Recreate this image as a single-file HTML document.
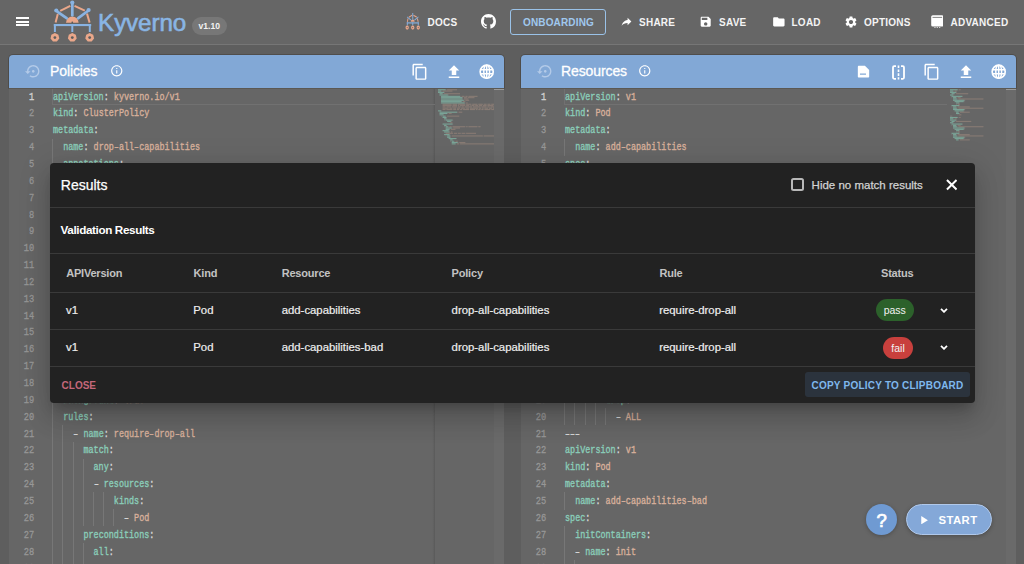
<!DOCTYPE html>
<html><head><meta charset="utf-8">
<style>
*{box-sizing:border-box;margin:0;padding:0}
html,body{width:1024px;height:564px;overflow:hidden;background:#5e5e5e;font-family:"Liberation Sans",sans-serif;position:relative}
.abs{position:absolute}
svg{position:absolute;display:block}
#tb{position:absolute;left:0;top:0;width:1024px;height:45px;background:#666;border-bottom:1px solid #767676}
.nav{position:absolute;top:17px;font-size:10px;font-weight:bold;color:#f4f4f4;letter-spacing:0.25px;line-height:12px;white-space:nowrap}
.panel{position:absolute;top:54.8px;width:495px;height:520px;background:#666;border-radius:4px 4px 0 0}
.hline{position:absolute;left:0;top:33.1px;width:495px;height:1.2px;background:#5b5853;z-index:5}
.ph{position:absolute;left:0;top:0;width:495px;height:33.3px;background:#82a8d6;border-radius:4px 4px 0 0;box-shadow:0 0 0.5px 0.8px rgba(60,55,50,0.55)}
.ptitle{position:absolute;top:8px;font-size:14px;color:#fff;line-height:16px;white-space:nowrap;-webkit-text-stroke:0.3px #fff;letter-spacing:-0.1px}
.ed{position:absolute;left:0;top:33.8px;width:495px;height:500px;background:#666;overflow:hidden}
.ln{position:absolute;left:0;width:25.3px;text-align:right;font-family:"Liberation Mono",monospace;font-size:10.6px;color:#979797;height:16.8px;line-height:17.4px;-webkit-text-stroke:0.3px currentColor;transform:scaleX(0.82);transform-origin:25.3px 0}
.ln.act{color:#d2d2d2;-webkit-text-stroke:0.35px currentColor}
.cl{position:absolute;left:43.7px;white-space:pre;font-family:"Liberation Mono",monospace;font-size:10.15px;letter-spacing:0;color:#d0d0d0;height:16.8px;line-height:18.2px;-webkit-text-stroke:0.35px currentColor;transform:scaleX(0.8342);transform-origin:0 0}
.cl i{font-style:normal;display:inline-block;transform:scaleX(1.45)}
.k{color:#8acdb9}.v{color:#d8b09b}.p{color:#dadada}
.guide{position:absolute;width:1px;background:#777}
.cur{position:absolute;left:42.6px;width:383px;height:16.2px;border:1px solid #717171;border-right:none;border-top:none}
.mm{left:429px;top:0}
.mmline{position:absolute;left:421.5px;top:0;width:4.3px;height:500px;background:linear-gradient(to right,rgba(0,0,0,0),rgba(0,0,0,0.02) 50%,rgba(0,0,0,0.13))}
.sbar{position:absolute;left:485.3px;top:0;width:9.7px;height:500px;background:#6a6a6a}
.sthumb{position:absolute;left:485.3px;top:0;width:9.7px;height:1.5px;background:#9a9a9a}
#modal{position:absolute;left:50px;top:162.8px;width:924.7px;height:239.8px;background:#222;border-radius:4px;box-shadow:0 8px 10px -5px rgba(0,0,0,.2),0 16px 24px 2px rgba(0,0,0,.12),0 6px 30px 5px rgba(0,0,0,.1);color:#fff}
.sep{position:absolute;left:0;width:924.7px;height:1px;background:#3a3a3a}
.th{position:absolute;top:104px;font-size:11px;font-weight:bold;color:#c2c2c2;line-height:13px;white-space:nowrap;letter-spacing:-0.2px}
.td{position:absolute;font-size:11.35px;color:#eeeeee;line-height:13px;white-space:nowrap;-webkit-text-stroke:0.2px currentColor;margin-top:-0.7px}
.badge{position:absolute;height:22px;border-radius:11px;font-size:10.5px;line-height:23.5px;text-align:center;color:#f2f2f2}
</style></head><body>

<!-- toolbar -->
<div id="tb">
  <div class="abs" style="left:16px;top:17px;width:13px;height:2px;background:#fff"></div>
  <div class="abs" style="left:16px;top:20.7px;width:13px;height:2px;background:#fff"></div>
  <div class="abs" style="left:16px;top:24.2px;width:13px;height:2px;background:#fff"></div>
  <svg style="left:45px;top:0px" width="55" height="45" viewBox="0 0 55 45">
    <g stroke="#eaa78a" stroke-width="2" fill="none" stroke-linecap="butt">
      <path d="M15.2 10.8 L25.3 5.8"/><path d="M29.5 5.8 L39.8 10.6"/>
      <path d="M12.8 14 L10.6 22.6"/><path d="M42 13.6 L44.6 22.6"/>
    </g>
    <path d="M21 22.8 A6.3 6.3 0 0 1 33.6 22.8 Z" fill="#eaa78a"/>
    <circle cx="27.3" cy="22.3" r="0.9" fill="#5a5a5a"/>
    <g stroke="#89b3e2" stroke-linecap="round">
      <path d="M27.3 4 L27.3 15.3" stroke-width="2.7"/>
      <path d="M12.6 11.8 L21.6 18.2" stroke-width="2.7"/>
      <path d="M42.2 11.5 L33.2 18.2" stroke-width="2.7"/>
    </g>
    <g fill="#89b3e2">
      <circle cx="27.3" cy="2.6" r="2.1"/><circle cx="11.3" cy="10.5" r="2.1"/><circle cx="43.6" cy="10.1" r="2.1"/>
      <rect x="8.8" y="24" width="37.4" height="2.1"/>
      <rect x="8.9" y="24" width="2" height="8"/>
      <rect x="26.3" y="24" width="2" height="8"/>
      <rect x="43.8" y="24" width="2" height="8"/>
    </g>
    <g fill="#eaa78a">
      <polygon points="9.90,33.00 13.42,34.69 14.29,38.50 11.85,41.55 7.95,41.55 5.51,38.50 6.38,34.69"/><polygon points="27.30,33.00 30.82,34.69 31.69,38.50 29.25,41.55 25.35,41.55 22.91,38.50 23.78,34.69"/><polygon points="44.70,33.00 48.22,34.69 49.09,38.50 46.65,41.55 42.75,41.55 40.31,38.50 41.18,34.69"/>
    </g>
    <g fill="#5c5c5c"><circle cx="9.9" cy="37.6" r="1.4"/><circle cx="27.3" cy="37.6" r="1.4"/><circle cx="44.7" cy="37.6" r="1.4"/></g>
  </svg>
  <div class="abs" style="left:98.1px;top:8.3px;font-size:24.2px;color:#89b5e4;line-height:30px;letter-spacing:-0.1px;-webkit-text-stroke:0.6px #89b5e4">Kyverno</div>
  <div class="abs" style="left:192px;top:17px;width:34.5px;height:17.8px;border-radius:9px;background:#777;color:#f2f2f2;font-size:8.6px;font-weight:bold;line-height:18.8px;text-align:center">v1.10</div>

  <!-- docs -->
  <svg style="left:404.3px;top:13.2px" width="17.5" height="17.5" viewBox="0 0 55 45" preserveAspectRatio="none">
    <g stroke="#e8a68b" stroke-width="3" fill="none"><path d="M15.2 10.8 L25.3 5.8"/><path d="M29.5 5.8 L39.8 10.6"/><path d="M12.8 14 L10.6 22.6"/><path d="M42 13.6 L44.6 22.6"/></g>
    <path d="M21.2 22.8 A6.2 6.2 0 0 1 33.6 22.8 Z" fill="#e8a68b"/>
    <g fill="#86b0de"><rect x="26" y="0" width="3" height="17"/><path d="M10 9 L22.5 17 L21 19 L9 11Z"/><path d="M45 9 L32.5 17 L34 19 L46 11Z"/><rect x="8.8" y="24" width="37.4" height="3"/><rect x="8.9" y="24" width="3" height="8"/><rect x="26" y="24" width="3" height="8"/><rect x="43.3" y="24" width="3" height="8"/></g>
    <g fill="none" stroke="#e8a68b" stroke-width="3.5"><circle cx="10" cy="37.5" r="3.5"/><circle cx="27.4" cy="37.5" r="3.5"/><circle cx="44.8" cy="37.5" r="3.5"/></g>
  </svg>
  <div class="nav" style="left:427.5px">DOCS</div>
  <!-- github -->
  <svg style="left:481px;top:14.2px" width="15" height="15" viewBox="0 0 16 16"><path fill="#fff" d="M8 0C3.58 0 0 3.58 0 8c0 3.54 2.29 6.53 5.47 7.59.4.07.55-.17.55-.38 0-.19-.01-.82-.01-1.49-2.01.37-2.53-.49-2.69-.94-.09-.23-.48-.94-.82-1.130-.28-.15-.68-.52-.01-.53.63-.01 1.08.58 1.23.82.72 1.21 1.87.87 2.330.66.07-.52.28-.87.51-1.07-1.780-.2-3.64-.89-3.64-3.95 0-.87.31-1.59.82-2.15-.08-.2-.36-1.02.08-2.12 0 0 .67-.21 2.2.82.64-.18 1.32-.27 2-.27.68 0 1.36.09 2 .27 1.53-1.04 2.2-.82 2.2-.82.44 1.1.16 1.92.08 2.12.51.56.82 1.27.82 2.15 0 3.07-1.87 3.75-3.65 3.95.29.25.54.73.54 1.48 0 1.07-.01 1.93-.01 2.2 0 .21.15.46.55.38A8.013 8.013 0 0016 8c0-4.42-3.58-8-8-8z"/></svg>
  <!-- onboarding -->
  <div class="abs" style="left:510.2px;top:9.4px;width:96px;height:25.4px;border:1.3px solid #9ac2e8;border-radius:3px"></div>
  <div class="nav" style="left:523px;color:#a0c8ee;letter-spacing:0.15px">ONBOARDING</div>
  <!-- share -->
  <svg style="left:620px;top:15px" width="13" height="13" viewBox="0 0 24 24"><path fill="#fff" d="M14 9V5l7 7-7 7v-4.1c-5 0-8.5 1.6-11 5.1 1-5 4-10 11-11z"/></svg>
  <div class="nav" style="left:639px">SHARE</div>
  <!-- save -->
  <svg style="left:699.2px;top:14.6px" width="13.4" height="13.4" viewBox="0 0 24 24"><path fill="#fff" d="M17 3H5c-1.11 0-2 .9-2 2v14c0 1.1.89 2 2 2h14c1.1 0 2-.9 2-2V7l-4-4zm-5 16c-1.66 0-3-1.34-3-3s1.34-3 3-3 3 1.34 3 3-1.34 3-3 3zm3-10H5V5h10v4z"/></svg>
  <div class="nav" style="left:719px">SAVE</div>
  <!-- load -->
  <svg style="left:771.5px;top:14.5px" width="13.7" height="13.7" viewBox="0 0 24 24"><path fill="#fff" d="M10 4H4c-1.1 0-1.99.9-1.99 2L2 18c0 1.1.9 2 2 2h16c1.1 0 2-.9 2-2V8c0-1.1-.9-2-2-2h-8l-2-2z"/></svg>
  <div class="nav" style="left:791.5px">LOAD</div>
  <!-- options -->
  <svg style="left:843.8px;top:14.8px" width="14" height="14" viewBox="0 0 24 24"><path fill="#fff" d="M19.14 12.94c.04-.3.06-.61.06-.94 0-.32-.02-.64-.07-.94l2.03-1.58c.18-.14.23-.41.12-.61l-1.92-3.32c-.12-.22-.37-.29-.59-.22l-2.39.96c-.5-.38-1.03-.7-1.62-.94l-.36-2.54c-.04-.24-.24-.41-.48-.41h-3.84c-.24 0-.43.17-.47.41l-.36 2.54c-.59.24-1.13.57-1.62.94l-2.39-.96c-.22-.08-.47 0-.59.22L2.74 8.87c-.12.21-.08.47.12.61l2.03 1.58c-.05.3-.09.63-.09.94s.02.64.07.94l-2.03 1.58c-.18.14-.23.41-.12.61l1.92 3.32c.12.22.37.29.59.22l2.39-.96c.5.38 1.03.7 1.62.94l.36 2.54c.05.24.24.41.48.41h3.840c.24 0 .44-.17.47-.41l.36-2.54c.59-.24 1.13-.56 1.62-.94l2.39.96c.22.08.47 0 .59-.22l1.92-3.32c.12-.22.07-.47-.12-.61l-2.01-1.58zM12 15.6c-1.98 0-3.6-1.62-3.6-3.6s1.62-3.6 3.6-3.6 3.6 1.62 3.6 3.6-1.62 3.6-3.6 3.6z"/></svg>
  <div class="nav" style="left:864px">OPTIONS</div>
  <!-- advanced -->
  <svg style="left:930.8px;top:14.6px" width="12.6" height="13.6" viewBox="0 0 12.6 13.6"><rect x="0.2" y="0.2" width="12.2" height="11.4" rx="1.6" fill="#fff"/><rect x="1.5" y="1.9" width="9.6" height="0.9" fill="#777"/><rect x="3.3" y="12.3" width="1.3" height="1.2" fill="#fff"/><rect x="5.65" y="12.3" width="1.3" height="1.2" fill="#fff"/><rect x="8" y="12.3" width="1.3" height="1.2" fill="#fff"/></svg>
  <div class="nav" style="left:950.5px">ADVANCED</div>
</div>

<!-- left panel -->
<div class="panel" style="left:9px">
  <div class="ph">
    <svg style="left:15.5px;top:8.4px" width="16.5" height="16.5" viewBox="0 0 24 24"><path fill="#b3cae8" d="M14 12c0-1.1-.9-2-2-2s-2 .9-2 2 .9 2 2 2 2-.9 2-2zm-2-9c-4.97 0-9 4.03-9 9H0l4 4 4-4H5c0-3.87 3.13-7 7-7s7 3.13 7 7-3.13 7-7 7c-1.51 0-2.910-.49-4.06-1.3l-1.42 1.44C8.04 20.3 9.94 21 12 21c4.97 0 9-4.03 9-9s-4.03-9-9-9z"/></svg>
    <div class="ptitle" style="left:41px">Policies</div>
    <svg style="left:100.5px;top:9.7px" width="13.5" height="13.5" viewBox="0 0 24 24"><path fill="#fff" d="M11 7h2v2h-2zm0 4h2v6h-2zm1-9C6.48 2 2 6.48 2 12s4.48 10 10 10 10-4.48 10-10S17.52 2 12 2zm0 18c-4.41 0-8-3.59-8-8s3.59-8 8-8 8 3.59 8 8-3.59 8-8 8z"/></svg>
    <svg style="left:401.6px;top:8.2px" width="17.6" height="17.6" viewBox="0 0 24 24"><path fill="#fff" d="M16 1H4c-1.1 0-2 .9-2 2v14h2V3h12V1zm3 4H8c-1.1 0-2 .9-2 2v14c0 1.1.9 2 2 2h11c1.1 0 2-.9 2-2V7c0-1.1-.9-2-2-2zm0 16H8V7h11v14z"/></svg>
    <svg style="left:435.6px;top:8.2px" width="18" height="18" viewBox="0 0 24 24"><path fill="#fff" d="M9 16h6v-6h4l-7-7-7 7h4zm-4 2h14v2H5z"/></svg>
    <svg style="left:469.3px;top:8.1px" width="17.4" height="17.4" viewBox="0 0 24 24"><circle cx="12" cy="12" r="9" fill="none" stroke="#fff" stroke-width="2.3"/><ellipse cx="12" cy="12" rx="4" ry="9" fill="none" stroke="#fff" stroke-width="2"/><path d="M3 9.2h18M3 14.8h18M12 3v18" stroke="#fff" stroke-width="2"/></svg>
  </div>
  <div class="hline"></div>
  <div class="ed">
    <div class="mmline"></div>
    <div class="sbar"></div>
    <div class="sthumb"></div>
<div class="cur" style="top:0px"></div>
<div class="ln act" style="top:0.0px">1</div>
<div class="cl" style="top:0.0px"><span class="k">apiVersion</span><span class="p">: </span><span class="v">kyverno.io/v1</span></div>
<div class="ln" style="top:16.9px">2</div>
<div class="cl" style="top:16.9px"><span class="k">kind</span><span class="p">: </span><span class="v">ClusterPolicy</span></div>
<div class="ln" style="top:33.7px">3</div>
<div class="cl" style="top:33.7px"><span class="k">metadata</span><span class="p">:</span></div>
<div class="ln" style="top:50.6px">4</div>
<div class="guide" style="left:43.2px;top:50.1px;height:17.1px"></div>
<div class="cl" style="top:50.6px">  <span class="k">name</span><span class="p">: </span><span class="v">drop<i>-</i>all<i>-</i>capabilities</span></div>
<div class="ln" style="top:67.4px">5</div>
<div class="guide" style="left:43.2px;top:66.9px;height:17.1px"></div>
<div class="cl" style="top:67.4px">  <span class="k">annotations</span><span class="p">:</span></div>
<div class="ln" style="top:84.2px">6</div>
<div class="guide" style="left:43.2px;top:83.8px;height:17.1px"></div>
<div class="guide" style="left:53.4px;top:83.8px;height:17.1px"></div>
<div class="cl" style="top:84.2px">    <span class="k">policies.kyverno.io/title</span><span class="p">: </span><span class="v">Drop All Capabilities</span></div>
<div class="ln" style="top:101.1px">7</div>
<div class="guide" style="left:43.2px;top:100.6px;height:17.1px"></div>
<div class="guide" style="left:53.4px;top:100.6px;height:17.1px"></div>
<div class="cl" style="top:101.1px">    <span class="k">policies.kyverno.io/category</span><span class="p">: </span><span class="v">Best Practices</span></div>
<div class="ln" style="top:118.0px">8</div>
<div class="guide" style="left:43.2px;top:117.5px;height:17.1px"></div>
<div class="guide" style="left:53.4px;top:117.5px;height:17.1px"></div>
<div class="cl" style="top:118.0px">    <span class="k">policies.kyverno.io/severity</span><span class="p">: </span><span class="v">medium</span></div>
<div class="ln" style="top:134.8px">9</div>
<div class="guide" style="left:43.2px;top:134.3px;height:17.1px"></div>
<div class="guide" style="left:53.4px;top:134.3px;height:17.1px"></div>
<div class="cl" style="top:134.8px">    <span class="k">policies.kyverno.io/minversion</span><span class="p">: </span><span class="v">1.6.0</span></div>
<div class="ln" style="top:151.7px">10</div>
<div class="guide" style="left:43.2px;top:151.2px;height:17.1px"></div>
<div class="guide" style="left:53.4px;top:151.2px;height:17.1px"></div>
<div class="cl" style="top:151.7px">    <span class="k">policies.kyverno.io/subject</span><span class="p">: </span><span class="v">Pod</span></div>
<div class="ln" style="top:168.5px">11</div>
<div class="guide" style="left:43.2px;top:168.0px;height:17.1px"></div>
<div class="guide" style="left:53.4px;top:168.0px;height:17.1px"></div>
<div class="cl" style="top:168.5px">    <span class="k">policies.kyverno.io/description</span><span class="p">: </span><span class="v">&gt;<i>-</i></span></div>
<div class="ln" style="top:185.4px">12</div>
<div class="guide" style="left:43.2px;top:184.9px;height:17.1px"></div>
<div class="guide" style="left:53.4px;top:184.9px;height:17.1px"></div>
<div class="guide" style="left:63.5px;top:184.9px;height:17.1px"></div>
<div class="cl" style="top:185.4px">      <span class="v">Capabilities permit privileged actions without giving full root access. All</span></div>
<div class="ln" style="top:202.2px">13</div>
<div class="guide" style="left:43.2px;top:201.7px;height:17.1px"></div>
<div class="guide" style="left:53.4px;top:201.7px;height:17.1px"></div>
<div class="guide" style="left:63.5px;top:201.7px;height:17.1px"></div>
<div class="cl" style="top:202.2px">      <span class="v">capabilities should be dropped from a Pod, with only those required added back.</span></div>
<div class="ln" style="top:219.1px">14</div>
<div class="guide" style="left:43.2px;top:218.6px;height:17.1px"></div>
<div class="guide" style="left:53.4px;top:218.6px;height:17.1px"></div>
<div class="guide" style="left:63.5px;top:218.6px;height:17.1px"></div>
<div class="cl" style="top:219.1px">      <span class="v">This policy ensures that all containers explicitly specify the `drop: [&quot;ALL&quot;]`</span></div>
<div class="ln" style="top:235.9px">15</div>
<div class="guide" style="left:43.2px;top:235.4px;height:17.1px"></div>
<div class="guide" style="left:53.4px;top:235.4px;height:17.1px"></div>
<div class="guide" style="left:63.5px;top:235.4px;height:17.1px"></div>
<div class="cl" style="top:235.9px">      <span class="v">ability. Note that this policy also illustrates how to cover drop entries in any</span></div>
<div class="ln" style="top:252.8px">16</div>
<div class="guide" style="left:43.2px;top:252.3px;height:17.1px"></div>
<div class="guide" style="left:53.4px;top:252.3px;height:17.1px"></div>
<div class="guide" style="left:63.5px;top:252.3px;height:17.1px"></div>
<div class="cl" style="top:252.8px">      <span class="v">case although this may not strictly conform to the Pod Security Standards.</span></div>
<div class="ln" style="top:269.6px">17</div>
<div class="cl" style="top:269.6px"><span class="k">spec</span><span class="p">:</span></div>
<div class="ln" style="top:286.5px">18</div>
<div class="guide" style="left:43.2px;top:286.0px;height:17.1px"></div>
<div class="cl" style="top:286.5px">  <span class="k">validationFailureAction</span><span class="p">: </span><span class="v">Audit</span></div>
<div class="ln" style="top:303.3px">19</div>
<div class="guide" style="left:43.2px;top:302.8px;height:17.1px"></div>
<div class="cl" style="top:303.3px">  <span class="k">background</span><span class="p">: </span><span class="v">true</span></div>
<div class="ln" style="top:320.2px">20</div>
<div class="guide" style="left:43.2px;top:319.7px;height:17.1px"></div>
<div class="cl" style="top:320.2px">  <span class="k">rules</span><span class="p">:</span></div>
<div class="ln" style="top:337.0px">21</div>
<div class="guide" style="left:43.2px;top:336.5px;height:17.1px"></div>
<div class="guide" style="left:53.4px;top:336.5px;height:17.1px"></div>
<div class="cl" style="top:337.0px">    <span class="p"><i>-</i> </span><span class="k">name</span><span class="p">: </span><span class="v">require<i>-</i>drop<i>-</i>all</span></div>
<div class="ln" style="top:353.9px">22</div>
<div class="guide" style="left:43.2px;top:353.4px;height:17.1px"></div>
<div class="guide" style="left:53.4px;top:353.4px;height:17.1px"></div>
<div class="guide" style="left:63.5px;top:353.4px;height:17.1px"></div>
<div class="cl" style="top:353.9px">      <span class="k">match</span><span class="p">:</span></div>
<div class="ln" style="top:370.7px">23</div>
<div class="guide" style="left:43.2px;top:370.2px;height:17.1px"></div>
<div class="guide" style="left:53.4px;top:370.2px;height:17.1px"></div>
<div class="guide" style="left:63.5px;top:370.2px;height:17.1px"></div>
<div class="guide" style="left:73.7px;top:370.2px;height:17.1px"></div>
<div class="cl" style="top:370.7px">        <span class="k">any</span><span class="p">:</span></div>
<div class="ln" style="top:387.6px">24</div>
<div class="guide" style="left:43.2px;top:387.1px;height:17.1px"></div>
<div class="guide" style="left:53.4px;top:387.1px;height:17.1px"></div>
<div class="guide" style="left:63.5px;top:387.1px;height:17.1px"></div>
<div class="guide" style="left:73.7px;top:387.1px;height:17.1px"></div>
<div class="cl" style="top:387.6px">        <span class="p"><i>-</i> </span><span class="k">resources</span><span class="p">:</span></div>
<div class="ln" style="top:404.4px">25</div>
<div class="guide" style="left:43.2px;top:403.9px;height:17.1px"></div>
<div class="guide" style="left:53.4px;top:403.9px;height:17.1px"></div>
<div class="guide" style="left:63.5px;top:403.9px;height:17.1px"></div>
<div class="guide" style="left:73.7px;top:403.9px;height:17.1px"></div>
<div class="guide" style="left:83.8px;top:403.9px;height:17.1px"></div>
<div class="guide" style="left:94.0px;top:403.9px;height:17.1px"></div>
<div class="cl" style="top:404.4px">            <span class="k">kinds</span><span class="p">:</span></div>
<div class="ln" style="top:421.3px">26</div>
<div class="guide" style="left:43.2px;top:420.8px;height:17.1px"></div>
<div class="guide" style="left:53.4px;top:420.8px;height:17.1px"></div>
<div class="guide" style="left:63.5px;top:420.8px;height:17.1px"></div>
<div class="guide" style="left:73.7px;top:420.8px;height:17.1px"></div>
<div class="guide" style="left:83.8px;top:420.8px;height:17.1px"></div>
<div class="guide" style="left:94.0px;top:420.8px;height:17.1px"></div>
<div class="guide" style="left:104.2px;top:420.8px;height:17.1px"></div>
<div class="cl" style="top:421.3px">              <span class="p"><i>-</i> </span><span class="v">Pod</span></div>
<div class="ln" style="top:438.1px">27</div>
<div class="guide" style="left:43.2px;top:437.6px;height:17.1px"></div>
<div class="guide" style="left:53.4px;top:437.6px;height:17.1px"></div>
<div class="guide" style="left:63.5px;top:437.6px;height:17.1px"></div>
<div class="cl" style="top:438.1px">      <span class="k">preconditions</span><span class="p">:</span></div>
<div class="ln" style="top:455.0px">28</div>
<div class="guide" style="left:43.2px;top:454.5px;height:17.1px"></div>
<div class="guide" style="left:53.4px;top:454.5px;height:17.1px"></div>
<div class="guide" style="left:63.5px;top:454.5px;height:17.1px"></div>
<div class="guide" style="left:73.7px;top:454.5px;height:17.1px"></div>
<div class="cl" style="top:455.0px">        <span class="k">all</span><span class="p">:</span></div>
<div class="ln" style="top:471.8px">29</div>
<div class="guide" style="left:43.2px;top:471.3px;height:17.1px"></div>
<div class="guide" style="left:53.4px;top:471.3px;height:17.1px"></div>
<div class="guide" style="left:63.5px;top:471.3px;height:17.1px"></div>
<div class="guide" style="left:73.7px;top:471.3px;height:17.1px"></div>
<svg class="mm" width="56" height="80" viewBox="0 0 56 80"><rect x="0.00" y="0.20" width="7.60" height="1.1" fill="#83bfad" opacity="0.7"/><rect x="7.60" y="0.20" width="0.76" height="1.1" fill="#a0a0a0" opacity="0.38"/><rect x="9.12" y="0.20" width="9.88" height="1.1" fill="#c09e8b" opacity="0.38"/><rect x="0.00" y="1.52" width="3.04" height="1.1" fill="#83bfad" opacity="0.7"/><rect x="3.04" y="1.52" width="0.76" height="1.1" fill="#a0a0a0" opacity="0.38"/><rect x="4.56" y="1.52" width="9.88" height="1.1" fill="#c09e8b" opacity="0.38"/><rect x="0.00" y="2.84" width="6.08" height="1.1" fill="#83bfad" opacity="0.7"/><rect x="6.08" y="2.84" width="0.76" height="1.1" fill="#a0a0a0" opacity="0.38"/><rect x="1.52" y="4.16" width="3.04" height="1.1" fill="#83bfad" opacity="0.7"/><rect x="4.56" y="4.16" width="0.76" height="1.1" fill="#a0a0a0" opacity="0.38"/><rect x="6.08" y="4.16" width="15.96" height="1.1" fill="#c09e8b" opacity="0.38"/><rect x="1.52" y="5.48" width="8.36" height="1.1" fill="#83bfad" opacity="0.7"/><rect x="9.88" y="5.48" width="0.76" height="1.1" fill="#a0a0a0" opacity="0.38"/><rect x="3.04" y="6.80" width="19.00" height="1.1" fill="#83bfad" opacity="0.7"/><rect x="22.04" y="6.80" width="0.76" height="1.1" fill="#a0a0a0" opacity="0.38"/><rect x="23.56" y="6.80" width="3.04" height="1.1" fill="#c09e8b" opacity="0.38"/><rect x="27.36" y="6.80" width="2.28" height="1.1" fill="#c09e8b" opacity="0.38"/><rect x="30.40" y="6.80" width="9.12" height="1.1" fill="#c09e8b" opacity="0.38"/><rect x="3.04" y="8.12" width="21.28" height="1.1" fill="#83bfad" opacity="0.7"/><rect x="24.32" y="8.12" width="0.76" height="1.1" fill="#a0a0a0" opacity="0.38"/><rect x="25.84" y="8.12" width="3.04" height="1.1" fill="#c09e8b" opacity="0.38"/><rect x="29.64" y="8.12" width="6.84" height="1.1" fill="#c09e8b" opacity="0.38"/><rect x="3.04" y="9.44" width="21.28" height="1.1" fill="#83bfad" opacity="0.7"/><rect x="24.32" y="9.44" width="0.76" height="1.1" fill="#a0a0a0" opacity="0.38"/><rect x="25.84" y="9.44" width="4.56" height="1.1" fill="#c09e8b" opacity="0.38"/><rect x="3.04" y="10.76" width="22.80" height="1.1" fill="#83bfad" opacity="0.7"/><rect x="25.84" y="10.76" width="0.76" height="1.1" fill="#a0a0a0" opacity="0.38"/><rect x="27.36" y="10.76" width="3.80" height="1.1" fill="#c09e8b" opacity="0.38"/><rect x="3.04" y="12.08" width="20.52" height="1.1" fill="#83bfad" opacity="0.7"/><rect x="23.56" y="12.08" width="0.76" height="1.1" fill="#a0a0a0" opacity="0.38"/><rect x="25.08" y="12.08" width="2.28" height="1.1" fill="#c09e8b" opacity="0.38"/><rect x="3.04" y="13.40" width="23.56" height="1.1" fill="#83bfad" opacity="0.7"/><rect x="26.60" y="13.40" width="0.76" height="1.1" fill="#a0a0a0" opacity="0.38"/><rect x="28.12" y="13.40" width="1.52" height="1.1" fill="#c09e8b" opacity="0.38"/><rect x="4.56" y="14.72" width="9.12" height="1.1" fill="#c09e8b" opacity="0.38"/><rect x="14.44" y="14.72" width="4.56" height="1.1" fill="#c09e8b" opacity="0.38"/><rect x="19.76" y="14.72" width="7.60" height="1.1" fill="#c09e8b" opacity="0.38"/><rect x="28.12" y="14.72" width="5.32" height="1.1" fill="#c09e8b" opacity="0.38"/><rect x="34.20" y="14.72" width="5.32" height="1.1" fill="#c09e8b" opacity="0.38"/><rect x="40.28" y="14.72" width="4.56" height="1.1" fill="#c09e8b" opacity="0.38"/><rect x="45.60" y="14.72" width="3.04" height="1.1" fill="#c09e8b" opacity="0.38"/><rect x="49.40" y="14.72" width="3.04" height="1.1" fill="#c09e8b" opacity="0.38"/><rect x="53.20" y="14.72" width="5.32" height="1.1" fill="#c09e8b" opacity="0.38"/><rect x="59.28" y="14.72" width="2.28" height="1.1" fill="#c09e8b" opacity="0.38"/><rect x="4.56" y="16.04" width="9.12" height="1.1" fill="#c09e8b" opacity="0.38"/><rect x="14.44" y="16.04" width="4.56" height="1.1" fill="#c09e8b" opacity="0.38"/><rect x="19.76" y="16.04" width="1.52" height="1.1" fill="#c09e8b" opacity="0.38"/><rect x="22.04" y="16.04" width="5.32" height="1.1" fill="#c09e8b" opacity="0.38"/><rect x="28.12" y="16.04" width="3.04" height="1.1" fill="#c09e8b" opacity="0.38"/><rect x="31.92" y="16.04" width="0.76" height="1.1" fill="#c09e8b" opacity="0.38"/><rect x="33.44" y="16.04" width="3.04" height="1.1" fill="#c09e8b" opacity="0.38"/><rect x="37.24" y="16.04" width="3.04" height="1.1" fill="#c09e8b" opacity="0.38"/><rect x="41.04" y="16.04" width="3.04" height="1.1" fill="#c09e8b" opacity="0.38"/><rect x="44.84" y="16.04" width="3.80" height="1.1" fill="#c09e8b" opacity="0.38"/><rect x="49.40" y="16.04" width="6.08" height="1.1" fill="#c09e8b" opacity="0.38"/><rect x="56.24" y="16.04" width="3.80" height="1.1" fill="#c09e8b" opacity="0.38"/><rect x="60.80" y="16.04" width="3.80" height="1.1" fill="#c09e8b" opacity="0.38"/><rect x="4.56" y="17.36" width="3.04" height="1.1" fill="#c09e8b" opacity="0.38"/><rect x="8.36" y="17.36" width="4.56" height="1.1" fill="#c09e8b" opacity="0.38"/><rect x="13.68" y="17.36" width="5.32" height="1.1" fill="#c09e8b" opacity="0.38"/><rect x="19.76" y="17.36" width="3.04" height="1.1" fill="#c09e8b" opacity="0.38"/><rect x="23.56" y="17.36" width="2.28" height="1.1" fill="#c09e8b" opacity="0.38"/><rect x="26.60" y="17.36" width="7.60" height="1.1" fill="#c09e8b" opacity="0.38"/><rect x="34.96" y="17.36" width="7.60" height="1.1" fill="#c09e8b" opacity="0.38"/><rect x="43.32" y="17.36" width="5.32" height="1.1" fill="#c09e8b" opacity="0.38"/><rect x="49.40" y="17.36" width="2.28" height="1.1" fill="#c09e8b" opacity="0.38"/><rect x="52.44" y="17.36" width="4.56" height="1.1" fill="#c09e8b" opacity="0.38"/><rect x="57.76" y="17.36" width="6.08" height="1.1" fill="#c09e8b" opacity="0.38"/><rect x="4.56" y="18.68" width="6.08" height="1.1" fill="#c09e8b" opacity="0.38"/><rect x="11.40" y="18.68" width="3.04" height="1.1" fill="#c09e8b" opacity="0.38"/><rect x="15.20" y="18.68" width="3.04" height="1.1" fill="#c09e8b" opacity="0.38"/><rect x="19.00" y="18.68" width="3.04" height="1.1" fill="#c09e8b" opacity="0.38"/><rect x="22.80" y="18.68" width="4.56" height="1.1" fill="#c09e8b" opacity="0.38"/><rect x="28.12" y="18.68" width="3.04" height="1.1" fill="#c09e8b" opacity="0.38"/><rect x="31.92" y="18.68" width="8.36" height="1.1" fill="#c09e8b" opacity="0.38"/><rect x="41.04" y="18.68" width="2.28" height="1.1" fill="#c09e8b" opacity="0.38"/><rect x="44.08" y="18.68" width="1.52" height="1.1" fill="#c09e8b" opacity="0.38"/><rect x="46.36" y="18.68" width="3.80" height="1.1" fill="#c09e8b" opacity="0.38"/><rect x="50.92" y="18.68" width="3.04" height="1.1" fill="#c09e8b" opacity="0.38"/><rect x="54.72" y="18.68" width="5.32" height="1.1" fill="#c09e8b" opacity="0.38"/><rect x="60.80" y="18.68" width="1.52" height="1.1" fill="#c09e8b" opacity="0.38"/><rect x="63.08" y="18.68" width="2.28" height="1.1" fill="#c09e8b" opacity="0.38"/><rect x="4.56" y="20.00" width="3.04" height="1.1" fill="#c09e8b" opacity="0.38"/><rect x="8.36" y="20.00" width="6.08" height="1.1" fill="#c09e8b" opacity="0.38"/><rect x="15.20" y="20.00" width="3.04" height="1.1" fill="#c09e8b" opacity="0.38"/><rect x="19.00" y="20.00" width="2.28" height="1.1" fill="#c09e8b" opacity="0.38"/><rect x="22.04" y="20.00" width="2.28" height="1.1" fill="#c09e8b" opacity="0.38"/><rect x="25.08" y="20.00" width="6.08" height="1.1" fill="#c09e8b" opacity="0.38"/><rect x="31.92" y="20.00" width="5.32" height="1.1" fill="#c09e8b" opacity="0.38"/><rect x="38.00" y="20.00" width="1.52" height="1.1" fill="#c09e8b" opacity="0.38"/><rect x="40.28" y="20.00" width="2.28" height="1.1" fill="#c09e8b" opacity="0.38"/><rect x="43.32" y="20.00" width="2.28" height="1.1" fill="#c09e8b" opacity="0.38"/><rect x="46.36" y="20.00" width="6.08" height="1.1" fill="#c09e8b" opacity="0.38"/><rect x="53.20" y="20.00" width="7.60" height="1.1" fill="#c09e8b" opacity="0.38"/><rect x="0.00" y="21.32" width="3.04" height="1.1" fill="#83bfad" opacity="0.7"/><rect x="3.04" y="21.32" width="0.76" height="1.1" fill="#a0a0a0" opacity="0.38"/><rect x="1.52" y="22.64" width="17.48" height="1.1" fill="#83bfad" opacity="0.7"/><rect x="19.00" y="22.64" width="0.76" height="1.1" fill="#a0a0a0" opacity="0.38"/><rect x="20.52" y="22.64" width="3.80" height="1.1" fill="#c09e8b" opacity="0.38"/><rect x="1.52" y="23.96" width="7.60" height="1.1" fill="#83bfad" opacity="0.7"/><rect x="9.12" y="23.96" width="0.76" height="1.1" fill="#a0a0a0" opacity="0.38"/><rect x="10.64" y="23.96" width="3.04" height="1.1" fill="#c09e8b" opacity="0.38"/><rect x="1.52" y="25.28" width="3.80" height="1.1" fill="#83bfad" opacity="0.7"/><rect x="5.32" y="25.28" width="0.76" height="1.1" fill="#a0a0a0" opacity="0.38"/><rect x="3.04" y="26.60" width="0.76" height="1.1" fill="#a0a0a0" opacity="0.38"/><rect x="4.56" y="26.60" width="3.04" height="1.1" fill="#83bfad" opacity="0.7"/><rect x="7.60" y="26.60" width="0.76" height="1.1" fill="#a0a0a0" opacity="0.38"/><rect x="9.12" y="26.60" width="12.16" height="1.1" fill="#c09e8b" opacity="0.38"/><rect x="4.56" y="27.92" width="3.80" height="1.1" fill="#83bfad" opacity="0.7"/><rect x="8.36" y="27.92" width="0.76" height="1.1" fill="#a0a0a0" opacity="0.38"/><rect x="6.08" y="29.24" width="2.28" height="1.1" fill="#83bfad" opacity="0.7"/><rect x="8.36" y="29.24" width="0.76" height="1.1" fill="#a0a0a0" opacity="0.38"/><rect x="6.08" y="30.56" width="0.76" height="1.1" fill="#a0a0a0" opacity="0.38"/><rect x="7.60" y="30.56" width="6.84" height="1.1" fill="#83bfad" opacity="0.7"/><rect x="14.44" y="30.56" width="0.76" height="1.1" fill="#a0a0a0" opacity="0.38"/><rect x="9.12" y="31.88" width="3.80" height="1.1" fill="#83bfad" opacity="0.7"/><rect x="12.92" y="31.88" width="0.76" height="1.1" fill="#a0a0a0" opacity="0.38"/><rect x="10.64" y="33.20" width="0.76" height="1.1" fill="#a0a0a0" opacity="0.38"/><rect x="12.16" y="33.20" width="2.28" height="1.1" fill="#c09e8b" opacity="0.38"/><rect x="4.56" y="34.52" width="9.88" height="1.1" fill="#83bfad" opacity="0.7"/><rect x="14.44" y="34.52" width="0.76" height="1.1" fill="#a0a0a0" opacity="0.38"/><rect x="6.08" y="35.84" width="2.28" height="1.1" fill="#83bfad" opacity="0.7"/><rect x="8.36" y="35.84" width="0.76" height="1.1" fill="#a0a0a0" opacity="0.38"/><rect x="6.08" y="37.16" width="0.76" height="1.1" fill="#a0a0a0" opacity="0.38"/><rect x="7.60" y="37.16" width="2.28" height="1.1" fill="#83bfad" opacity="0.7"/><rect x="9.88" y="37.16" width="0.76" height="1.1" fill="#a0a0a0" opacity="0.38"/><rect x="11.40" y="37.16" width="2.28" height="1.1" fill="#c09e8b" opacity="0.38"/><rect x="14.44" y="37.16" width="12.92" height="1.1" fill="#c09e8b" opacity="0.38"/><rect x="28.12" y="37.16" width="1.52" height="1.1" fill="#c09e8b" opacity="0.38"/><rect x="30.40" y="37.16" width="9.12" height="1.1" fill="#c09e8b" opacity="0.38"/><rect x="40.28" y="37.16" width="2.28" height="1.1" fill="#c09e8b" opacity="0.38"/><rect x="7.60" y="38.48" width="6.08" height="1.1" fill="#83bfad" opacity="0.7"/><rect x="13.68" y="38.48" width="0.76" height="1.1" fill="#a0a0a0" opacity="0.38"/><rect x="15.20" y="38.48" width="6.84" height="1.1" fill="#c09e8b" opacity="0.38"/><rect x="7.60" y="39.80" width="3.80" height="1.1" fill="#83bfad" opacity="0.7"/><rect x="11.40" y="39.80" width="0.76" height="1.1" fill="#a0a0a0" opacity="0.38"/><rect x="12.92" y="39.80" width="4.56" height="1.1" fill="#c09e8b" opacity="0.38"/><rect x="4.56" y="41.12" width="6.08" height="1.1" fill="#83bfad" opacity="0.7"/><rect x="10.64" y="41.12" width="0.76" height="1.1" fill="#a0a0a0" opacity="0.38"/><rect x="6.08" y="42.44" width="5.32" height="1.1" fill="#83bfad" opacity="0.7"/><rect x="11.40" y="42.44" width="0.76" height="1.1" fill="#a0a0a0" opacity="0.38"/><rect x="12.92" y="42.44" width="1.52" height="1.1" fill="#c09e8b" opacity="0.38"/><rect x="7.60" y="43.76" width="7.60" height="1.1" fill="#c09e8b" opacity="0.38"/><rect x="15.96" y="43.76" width="3.04" height="1.1" fill="#c09e8b" opacity="0.38"/><rect x="19.76" y="43.76" width="3.04" height="1.1" fill="#c09e8b" opacity="0.38"/><rect x="23.56" y="43.76" width="3.80" height="1.1" fill="#c09e8b" opacity="0.38"/><rect x="28.12" y="43.76" width="9.88" height="1.1" fill="#c09e8b" opacity="0.38"/><rect x="6.08" y="45.08" width="5.32" height="1.1" fill="#83bfad" opacity="0.7"/><rect x="11.40" y="45.08" width="0.76" height="1.1" fill="#a0a0a0" opacity="0.38"/><rect x="7.60" y="46.40" width="0.76" height="1.1" fill="#a0a0a0" opacity="0.38"/><rect x="9.12" y="46.40" width="3.04" height="1.1" fill="#83bfad" opacity="0.7"/><rect x="12.16" y="46.40" width="0.76" height="1.1" fill="#a0a0a0" opacity="0.38"/><rect x="13.68" y="46.40" width="31.16" height="1.1" fill="#c09e8b" opacity="0.38"/><rect x="45.60" y="46.40" width="11.40" height="1.1" fill="#c09e8b" opacity="0.38"/><rect x="57.76" y="46.40" width="9.88" height="1.1" fill="#c09e8b" opacity="0.38"/><rect x="9.12" y="47.72" width="3.04" height="1.1" fill="#83bfad" opacity="0.7"/><rect x="12.16" y="47.72" width="0.76" height="1.1" fill="#a0a0a0" opacity="0.38"/><rect x="10.64" y="49.04" width="7.60" height="1.1" fill="#83bfad" opacity="0.7"/><rect x="18.24" y="49.04" width="0.76" height="1.1" fill="#a0a0a0" opacity="0.38"/><rect x="12.16" y="50.36" width="2.28" height="1.1" fill="#83bfad" opacity="0.7"/><rect x="14.44" y="50.36" width="0.76" height="1.1" fill="#a0a0a0" opacity="0.38"/><rect x="12.16" y="51.68" width="0.76" height="1.1" fill="#a0a0a0" opacity="0.38"/><rect x="13.68" y="51.68" width="2.28" height="1.1" fill="#83bfad" opacity="0.7"/><rect x="15.96" y="51.68" width="0.76" height="1.1" fill="#a0a0a0" opacity="0.38"/><rect x="17.48" y="51.68" width="2.28" height="1.1" fill="#c09e8b" opacity="0.38"/><rect x="13.68" y="53.00" width="6.08" height="1.1" fill="#83bfad" opacity="0.7"/><rect x="19.76" y="53.00" width="0.76" height="1.1" fill="#a0a0a0" opacity="0.38"/><rect x="21.28" y="53.00" width="6.08" height="1.1" fill="#c09e8b" opacity="0.38"/><rect x="13.68" y="54.32" width="3.80" height="1.1" fill="#83bfad" opacity="0.7"/><rect x="17.48" y="54.32" width="0.76" height="1.1" fill="#a0a0a0" opacity="0.38"/><rect x="19.00" y="54.32" width="2.28" height="1.1" fill="#c09e8b" opacity="0.38"/><rect x="22.04" y="54.32" width="41.80" height="1.1" fill="#c09e8b" opacity="0.38"/><rect x="64.60" y="54.32" width="1.52" height="1.1" fill="#c09e8b" opacity="0.38"/><rect x="66.88" y="54.32" width="3.04" height="1.1" fill="#c09e8b" opacity="0.38"/><rect x="70.68" y="54.32" width="2.28" height="1.1" fill="#c09e8b" opacity="0.38"/></svg>
  </div>
</div>

<!-- right panel -->
<div class="panel" style="left:521px">
  <div class="ph">
    <svg style="left:15.5px;top:8.6px" width="16.5" height="16.5" viewBox="0 0 24 24"><path fill="#b3cae8" d="M14 12c0-1.1-.9-2-2-2s-2 .9-2 2 .9 2 2 2 2-.9 2-2zm-2-9c-4.97 0-9 4.03-9 9H0l4 4 4-4H5c0-3.87 3.13-7 7-7s7 3.13 7 7-3.13 7-7 7c-1.51 0-2.910-.49-4.06-1.3l-1.42 1.44C8.04 20.3 9.94 21 12 21c4.97 0 9-4.03 9-9s-4.03-9-9-9z"/></svg>
    <div class="ptitle" style="left:40px">Resources</div>
    <svg style="left:116.8px;top:9.7px" width="13.5" height="13.5" viewBox="0 0 24 24"><path fill="#fff" d="M11 7h2v2h-2zm0 4h2v6h-2zm1-9C6.48 2 2 6.48 2 12s4.48 10 10 10 10-4.48 10-10S17.52 2 12 2zm0 18c-4.41 0-8-3.59-8-8s3.59-8 8-8 8 3.59 8 8-3.59 8-8 8z"/></svg>
    <svg style="left:334px;top:8.5px" width="17" height="17" viewBox="0 0 24 24"><path fill="#fff" fill-rule="evenodd" d="M5.5 4h8.5l6 6V19c0 .9-.6 1.5-1.5 1.5h-13C4.6 20.5 4 19.9 4 19V5.5C4 4.6 4.6 4 5.5 4zM7 14.8h8.5v1.9H7z"/></svg>
    <svg style="left:370.5px;top:9.8px" width="13" height="15" viewBox="0 0 13 15"><path d="M4 1.2H2.2Q1 1.2 1 2.4V12.6Q1 13.8 2.2 13.8H4M9 1.2H10.8Q12 1.2 12 2.4V12.6Q12 13.8 10.8 13.8H9" fill="none" stroke="#fff" stroke-width="1.8"/><path d="M6.5 0.5v14" stroke="#fff" stroke-width="1.6" stroke-dasharray="2.6 1.3"/></svg>
    <svg style="left:401.6px;top:8.2px" width="17.6" height="17.6" viewBox="0 0 24 24"><path fill="#fff" d="M16 1H4c-1.1 0-2 .9-2 2v14h2V3h12V1zm3 4H8c-1.1 0-2 .9-2 2v14c0 1.1.9 2 2 2h11c1.1 0 2-.9 2-2V7c0-1.1-.9-2-2-2zm0 16H8V7h11v14z"/></svg>
    <svg style="left:435.6px;top:8.2px" width="18" height="18" viewBox="0 0 24 24"><path fill="#fff" d="M9 16h6v-6h4l-7-7-7 7h4zm-4 2h14v2H5z"/></svg>
    <svg style="left:469.3px;top:8.1px" width="17.4" height="17.4" viewBox="0 0 24 24"><circle cx="12" cy="12" r="9" fill="none" stroke="#fff" stroke-width="2.3"/><ellipse cx="12" cy="12" rx="4" ry="9" fill="none" stroke="#fff" stroke-width="2"/><path d="M3 9.2h18M3 14.8h18M12 3v18" stroke="#fff" stroke-width="2"/></svg>
  </div>
  <div class="hline"></div>
  <div class="ed">
    
    <div class="sbar"></div>
    <div class="sthumb"></div>
<div class="cur" style="top:0px"></div>
<div class="ln act" style="top:0.0px">1</div>
<div class="cl" style="top:0.0px"><span class="k">apiVersion</span><span class="p">: </span><span class="v">v1</span></div>
<div class="ln" style="top:16.9px">2</div>
<div class="cl" style="top:16.9px"><span class="k">kind</span><span class="p">: </span><span class="v">Pod</span></div>
<div class="ln" style="top:33.7px">3</div>
<div class="cl" style="top:33.7px"><span class="k">metadata</span><span class="p">:</span></div>
<div class="ln" style="top:50.6px">4</div>
<div class="guide" style="left:43.2px;top:50.1px;height:17.1px"></div>
<div class="cl" style="top:50.6px">  <span class="k">name</span><span class="p">: </span><span class="v">add<i>-</i>capabilities</span></div>
<div class="ln" style="top:67.4px">5</div>
<div class="cl" style="top:67.4px"><span class="k">spec</span><span class="p">:</span></div>
<div class="ln" style="top:84.2px">6</div>
<div class="guide" style="left:43.2px;top:83.8px;height:17.1px"></div>
<div class="cl" style="top:84.2px">  <span class="k">initContainers</span><span class="p">:</span></div>
<div class="ln" style="top:101.1px">7</div>
<div class="guide" style="left:43.2px;top:100.6px;height:17.1px"></div>
<div class="cl" style="top:101.1px">  <span class="p"><i>-</i> </span><span class="k">name</span><span class="p">: </span><span class="v">init</span></div>
<div class="ln" style="top:118.0px">8</div>
<div class="guide" style="left:43.2px;top:117.5px;height:17.1px"></div>
<div class="guide" style="left:53.4px;top:117.5px;height:17.1px"></div>
<div class="cl" style="top:118.0px">    <span class="k">image</span><span class="p">: </span><span class="v">ghcr.io/kyverno/test<i>-</i>busybox:1.35</span></div>
<div class="ln" style="top:134.8px">9</div>
<div class="guide" style="left:43.2px;top:134.3px;height:17.1px"></div>
<div class="guide" style="left:53.4px;top:134.3px;height:17.1px"></div>
<div class="cl" style="top:134.8px">    <span class="k">securityContext</span><span class="p">:</span></div>
<div class="ln" style="top:151.7px">10</div>
<div class="guide" style="left:43.2px;top:151.2px;height:17.1px"></div>
<div class="guide" style="left:53.4px;top:151.2px;height:17.1px"></div>
<div class="guide" style="left:63.5px;top:151.2px;height:17.1px"></div>
<div class="cl" style="top:151.7px">      <span class="k">capabilities</span><span class="p">:</span></div>
<div class="ln" style="top:168.5px">11</div>
<div class="guide" style="left:43.2px;top:168.0px;height:17.1px"></div>
<div class="guide" style="left:53.4px;top:168.0px;height:17.1px"></div>
<div class="guide" style="left:63.5px;top:168.0px;height:17.1px"></div>
<div class="guide" style="left:73.7px;top:168.0px;height:17.1px"></div>
<div class="cl" style="top:168.5px">        <span class="k">drop</span><span class="p">:</span></div>
<div class="ln" style="top:185.4px">12</div>
<div class="guide" style="left:43.2px;top:184.9px;height:17.1px"></div>
<div class="guide" style="left:53.4px;top:184.9px;height:17.1px"></div>
<div class="guide" style="left:63.5px;top:184.9px;height:17.1px"></div>
<div class="guide" style="left:73.7px;top:184.9px;height:17.1px"></div>
<div class="cl" style="top:185.4px">        <span class="p"><i>-</i> </span><span class="v">ALL</span></div>
<div class="ln" style="top:202.2px">13</div>
<div class="guide" style="left:43.2px;top:201.7px;height:17.1px"></div>
<div class="cl" style="top:202.2px">  <span class="k">containers</span><span class="p">:</span></div>
<div class="ln" style="top:219.1px">14</div>
<div class="guide" style="left:43.2px;top:218.6px;height:17.1px"></div>
<div class="cl" style="top:219.1px">  <span class="p"><i>-</i> </span><span class="k">name</span><span class="p">: </span><span class="v">add<i>-</i>capabilities</span></div>
<div class="ln" style="top:235.9px">15</div>
<div class="guide" style="left:43.2px;top:235.4px;height:17.1px"></div>
<div class="guide" style="left:53.4px;top:235.4px;height:17.1px"></div>
<div class="cl" style="top:235.9px">    <span class="k">image</span><span class="p">: </span><span class="v">ghcr.io/kyverno/test<i>-</i>busybox:1.35</span></div>
<div class="ln" style="top:252.8px">16</div>
<div class="guide" style="left:43.2px;top:252.3px;height:17.1px"></div>
<div class="guide" style="left:53.4px;top:252.3px;height:17.1px"></div>
<div class="cl" style="top:252.8px">    <span class="k">securityContext</span><span class="p">:</span></div>
<div class="ln" style="top:269.6px">17</div>
<div class="guide" style="left:43.2px;top:269.1px;height:17.1px"></div>
<div class="guide" style="left:53.4px;top:269.1px;height:17.1px"></div>
<div class="guide" style="left:63.5px;top:269.1px;height:17.1px"></div>
<div class="cl" style="top:269.6px">      <span class="k">capabilities</span><span class="p">:</span></div>
<div class="ln" style="top:286.5px">18</div>
<div class="guide" style="left:43.2px;top:286.0px;height:17.1px"></div>
<div class="guide" style="left:53.4px;top:286.0px;height:17.1px"></div>
<div class="guide" style="left:63.5px;top:286.0px;height:17.1px"></div>
<div class="guide" style="left:73.7px;top:286.0px;height:17.1px"></div>
<div class="cl" style="top:286.5px">        <span class="k">add</span><span class="p">: </span><span class="v">[&quot;NET_ADMIN&quot;]</span></div>
<div class="ln" style="top:303.3px">19</div>
<div class="guide" style="left:43.2px;top:302.8px;height:17.1px"></div>
<div class="guide" style="left:53.4px;top:302.8px;height:17.1px"></div>
<div class="guide" style="left:63.5px;top:302.8px;height:17.1px"></div>
<div class="guide" style="left:73.7px;top:302.8px;height:17.1px"></div>
<div class="cl" style="top:303.3px">        <span class="k">drop</span><span class="p">:</span></div>
<div class="ln" style="top:320.2px">20</div>
<div class="guide" style="left:43.2px;top:319.7px;height:17.1px"></div>
<div class="guide" style="left:53.4px;top:319.7px;height:17.1px"></div>
<div class="guide" style="left:63.5px;top:319.7px;height:17.1px"></div>
<div class="guide" style="left:73.7px;top:319.7px;height:17.1px"></div>
<div class="guide" style="left:83.8px;top:319.7px;height:17.1px"></div>
<div class="cl" style="top:320.2px">          <span class="p"><i>-</i> </span><span class="v">ALL</span></div>
<div class="ln" style="top:337.0px">21</div>
<div class="cl" style="top:337.0px"><span class="p"><i>-</i><i>-</i><i>-</i></span></div>
<div class="ln" style="top:353.9px">22</div>
<div class="cl" style="top:353.9px"><span class="k">apiVersion</span><span class="p">: </span><span class="v">v1</span></div>
<div class="ln" style="top:370.7px">23</div>
<div class="cl" style="top:370.7px"><span class="k">kind</span><span class="p">: </span><span class="v">Pod</span></div>
<div class="ln" style="top:387.6px">24</div>
<div class="cl" style="top:387.6px"><span class="k">metadata</span><span class="p">:</span></div>
<div class="ln" style="top:404.4px">25</div>
<div class="guide" style="left:43.2px;top:403.9px;height:17.1px"></div>
<div class="cl" style="top:404.4px">  <span class="k">name</span><span class="p">: </span><span class="v">add<i>-</i>capabilities<i>-</i>bad</span></div>
<div class="ln" style="top:421.3px">26</div>
<div class="cl" style="top:421.3px"><span class="k">spec</span><span class="p">:</span></div>
<div class="ln" style="top:438.1px">27</div>
<div class="guide" style="left:43.2px;top:437.6px;height:17.1px"></div>
<div class="cl" style="top:438.1px">  <span class="k">initContainers</span><span class="p">:</span></div>
<div class="ln" style="top:455.0px">28</div>
<div class="guide" style="left:43.2px;top:454.5px;height:17.1px"></div>
<div class="cl" style="top:455.0px">  <span class="p"><i>-</i> </span><span class="k">name</span><span class="p">: </span><span class="v">init</span></div>
<div class="ln" style="top:471.8px">29</div>
<div class="guide" style="left:43.2px;top:471.3px;height:17.1px"></div>
<div class="guide" style="left:53.4px;top:471.3px;height:17.1px"></div>
<svg class="mm" width="56" height="80" viewBox="0 0 56 80"><rect x="0.00" y="0.20" width="7.60" height="1.1" fill="#83bfad" opacity="0.7"/><rect x="7.60" y="0.20" width="0.76" height="1.1" fill="#a0a0a0" opacity="0.38"/><rect x="9.12" y="0.20" width="1.52" height="1.1" fill="#c09e8b" opacity="0.38"/><rect x="0.00" y="1.52" width="3.04" height="1.1" fill="#83bfad" opacity="0.7"/><rect x="3.04" y="1.52" width="0.76" height="1.1" fill="#a0a0a0" opacity="0.38"/><rect x="4.56" y="1.52" width="2.28" height="1.1" fill="#c09e8b" opacity="0.38"/><rect x="0.00" y="2.84" width="6.08" height="1.1" fill="#83bfad" opacity="0.7"/><rect x="6.08" y="2.84" width="0.76" height="1.1" fill="#a0a0a0" opacity="0.38"/><rect x="1.52" y="4.16" width="3.04" height="1.1" fill="#83bfad" opacity="0.7"/><rect x="4.56" y="4.16" width="0.76" height="1.1" fill="#a0a0a0" opacity="0.38"/><rect x="6.08" y="4.16" width="12.16" height="1.1" fill="#c09e8b" opacity="0.38"/><rect x="0.00" y="5.48" width="3.04" height="1.1" fill="#83bfad" opacity="0.7"/><rect x="3.04" y="5.48" width="0.76" height="1.1" fill="#a0a0a0" opacity="0.38"/><rect x="1.52" y="6.80" width="10.64" height="1.1" fill="#83bfad" opacity="0.7"/><rect x="12.16" y="6.80" width="0.76" height="1.1" fill="#a0a0a0" opacity="0.38"/><rect x="1.52" y="8.12" width="0.76" height="1.1" fill="#a0a0a0" opacity="0.38"/><rect x="3.04" y="8.12" width="3.04" height="1.1" fill="#83bfad" opacity="0.7"/><rect x="6.08" y="8.12" width="0.76" height="1.1" fill="#a0a0a0" opacity="0.38"/><rect x="7.60" y="8.12" width="3.04" height="1.1" fill="#c09e8b" opacity="0.38"/><rect x="3.04" y="9.44" width="3.80" height="1.1" fill="#83bfad" opacity="0.7"/><rect x="6.84" y="9.44" width="0.76" height="1.1" fill="#a0a0a0" opacity="0.38"/><rect x="8.36" y="9.44" width="25.08" height="1.1" fill="#c09e8b" opacity="0.38"/><rect x="3.04" y="10.76" width="11.40" height="1.1" fill="#83bfad" opacity="0.7"/><rect x="14.44" y="10.76" width="0.76" height="1.1" fill="#a0a0a0" opacity="0.38"/><rect x="4.56" y="12.08" width="9.12" height="1.1" fill="#83bfad" opacity="0.7"/><rect x="13.68" y="12.08" width="0.76" height="1.1" fill="#a0a0a0" opacity="0.38"/><rect x="6.08" y="13.40" width="3.04" height="1.1" fill="#83bfad" opacity="0.7"/><rect x="9.12" y="13.40" width="0.76" height="1.1" fill="#a0a0a0" opacity="0.38"/><rect x="6.08" y="14.72" width="0.76" height="1.1" fill="#a0a0a0" opacity="0.38"/><rect x="7.60" y="14.72" width="2.28" height="1.1" fill="#c09e8b" opacity="0.38"/><rect x="1.52" y="16.04" width="7.60" height="1.1" fill="#83bfad" opacity="0.7"/><rect x="9.12" y="16.04" width="0.76" height="1.1" fill="#a0a0a0" opacity="0.38"/><rect x="1.52" y="17.36" width="0.76" height="1.1" fill="#a0a0a0" opacity="0.38"/><rect x="3.04" y="17.36" width="3.04" height="1.1" fill="#83bfad" opacity="0.7"/><rect x="6.08" y="17.36" width="0.76" height="1.1" fill="#a0a0a0" opacity="0.38"/><rect x="7.60" y="17.36" width="12.16" height="1.1" fill="#c09e8b" opacity="0.38"/><rect x="3.04" y="18.68" width="3.80" height="1.1" fill="#83bfad" opacity="0.7"/><rect x="6.84" y="18.68" width="0.76" height="1.1" fill="#a0a0a0" opacity="0.38"/><rect x="8.36" y="18.68" width="25.08" height="1.1" fill="#c09e8b" opacity="0.38"/><rect x="3.04" y="20.00" width="11.40" height="1.1" fill="#83bfad" opacity="0.7"/><rect x="14.44" y="20.00" width="0.76" height="1.1" fill="#a0a0a0" opacity="0.38"/><rect x="4.56" y="21.32" width="9.12" height="1.1" fill="#83bfad" opacity="0.7"/><rect x="13.68" y="21.32" width="0.76" height="1.1" fill="#a0a0a0" opacity="0.38"/><rect x="6.08" y="22.64" width="2.28" height="1.1" fill="#83bfad" opacity="0.7"/><rect x="8.36" y="22.64" width="0.76" height="1.1" fill="#a0a0a0" opacity="0.38"/><rect x="9.88" y="22.64" width="9.88" height="1.1" fill="#c09e8b" opacity="0.38"/><rect x="6.08" y="23.96" width="3.04" height="1.1" fill="#83bfad" opacity="0.7"/><rect x="9.12" y="23.96" width="0.76" height="1.1" fill="#a0a0a0" opacity="0.38"/><rect x="7.60" y="25.28" width="0.76" height="1.1" fill="#a0a0a0" opacity="0.38"/><rect x="9.12" y="25.28" width="2.28" height="1.1" fill="#c09e8b" opacity="0.38"/><rect x="0.00" y="26.60" width="2.28" height="1.1" fill="#a0a0a0" opacity="0.38"/><rect x="0.00" y="27.92" width="7.60" height="1.1" fill="#83bfad" opacity="0.7"/><rect x="7.60" y="27.92" width="0.76" height="1.1" fill="#a0a0a0" opacity="0.38"/><rect x="9.12" y="27.92" width="1.52" height="1.1" fill="#c09e8b" opacity="0.38"/><rect x="0.00" y="29.24" width="3.04" height="1.1" fill="#83bfad" opacity="0.7"/><rect x="3.04" y="29.24" width="0.76" height="1.1" fill="#a0a0a0" opacity="0.38"/><rect x="4.56" y="29.24" width="2.28" height="1.1" fill="#c09e8b" opacity="0.38"/><rect x="0.00" y="30.56" width="6.08" height="1.1" fill="#83bfad" opacity="0.7"/><rect x="6.08" y="30.56" width="0.76" height="1.1" fill="#a0a0a0" opacity="0.38"/><rect x="1.52" y="31.88" width="3.04" height="1.1" fill="#83bfad" opacity="0.7"/><rect x="4.56" y="31.88" width="0.76" height="1.1" fill="#a0a0a0" opacity="0.38"/><rect x="6.08" y="31.88" width="15.20" height="1.1" fill="#c09e8b" opacity="0.38"/><rect x="0.00" y="33.20" width="3.04" height="1.1" fill="#83bfad" opacity="0.7"/><rect x="3.04" y="33.20" width="0.76" height="1.1" fill="#a0a0a0" opacity="0.38"/><rect x="1.52" y="34.52" width="10.64" height="1.1" fill="#83bfad" opacity="0.7"/><rect x="12.16" y="34.52" width="0.76" height="1.1" fill="#a0a0a0" opacity="0.38"/><rect x="1.52" y="35.84" width="0.76" height="1.1" fill="#a0a0a0" opacity="0.38"/><rect x="3.04" y="35.84" width="3.04" height="1.1" fill="#83bfad" opacity="0.7"/><rect x="6.08" y="35.84" width="0.76" height="1.1" fill="#a0a0a0" opacity="0.38"/><rect x="7.60" y="35.84" width="3.04" height="1.1" fill="#c09e8b" opacity="0.38"/><rect x="3.04" y="37.16" width="3.80" height="1.1" fill="#83bfad" opacity="0.7"/><rect x="6.84" y="37.16" width="0.76" height="1.1" fill="#a0a0a0" opacity="0.38"/><rect x="8.36" y="37.16" width="25.08" height="1.1" fill="#c09e8b" opacity="0.38"/><rect x="3.04" y="38.48" width="11.40" height="1.1" fill="#83bfad" opacity="0.7"/><rect x="14.44" y="38.48" width="0.76" height="1.1" fill="#a0a0a0" opacity="0.38"/><rect x="4.56" y="39.80" width="9.12" height="1.1" fill="#83bfad" opacity="0.7"/><rect x="13.68" y="39.80" width="0.76" height="1.1" fill="#a0a0a0" opacity="0.38"/><rect x="6.08" y="41.12" width="3.04" height="1.1" fill="#83bfad" opacity="0.7"/><rect x="9.12" y="41.12" width="0.76" height="1.1" fill="#a0a0a0" opacity="0.38"/><rect x="6.08" y="42.44" width="0.76" height="1.1" fill="#a0a0a0" opacity="0.38"/><rect x="7.60" y="42.44" width="2.28" height="1.1" fill="#c09e8b" opacity="0.38"/><rect x="1.52" y="43.76" width="7.60" height="1.1" fill="#83bfad" opacity="0.7"/><rect x="9.12" y="43.76" width="0.76" height="1.1" fill="#a0a0a0" opacity="0.38"/><rect x="1.52" y="45.08" width="0.76" height="1.1" fill="#a0a0a0" opacity="0.38"/><rect x="3.04" y="45.08" width="3.04" height="1.1" fill="#83bfad" opacity="0.7"/><rect x="6.08" y="45.08" width="0.76" height="1.1" fill="#a0a0a0" opacity="0.38"/><rect x="7.60" y="45.08" width="12.16" height="1.1" fill="#c09e8b" opacity="0.38"/><rect x="3.04" y="46.40" width="3.80" height="1.1" fill="#83bfad" opacity="0.7"/><rect x="6.84" y="46.40" width="0.76" height="1.1" fill="#a0a0a0" opacity="0.38"/><rect x="8.36" y="46.40" width="25.08" height="1.1" fill="#c09e8b" opacity="0.38"/><rect x="3.04" y="47.72" width="11.40" height="1.1" fill="#83bfad" opacity="0.7"/><rect x="14.44" y="47.72" width="0.76" height="1.1" fill="#a0a0a0" opacity="0.38"/><rect x="4.56" y="49.04" width="9.12" height="1.1" fill="#83bfad" opacity="0.7"/><rect x="13.68" y="49.04" width="0.76" height="1.1" fill="#a0a0a0" opacity="0.38"/><rect x="6.08" y="50.36" width="2.28" height="1.1" fill="#83bfad" opacity="0.7"/><rect x="8.36" y="50.36" width="0.76" height="1.1" fill="#a0a0a0" opacity="0.38"/><rect x="9.88" y="50.36" width="9.88" height="1.1" fill="#c09e8b" opacity="0.38"/></svg>
  </div>
</div>

<!-- fab -->
<div class="abs" style="left:866px;top:504px;width:31.2px;height:31.2px;border-radius:50%;background:#6f9ad2;box-shadow:0 1px 4px rgba(0,0,0,.25)"></div>
<div class="abs" style="left:866px;top:504.5px;width:31.2px;text-align:center;font-size:18.5px;font-weight:normal;color:#fff;line-height:31px;-webkit-text-stroke:0.7px #fff">?</div>
<div class="abs" style="left:905.6px;top:504.4px;width:86.2px;height:31px;border-radius:16px;background:#84a8d8;border:1px solid #b0c8ea;box-shadow:0 1px 4px rgba(0,0,0,.25)"></div>
<svg style="left:920.8px;top:515.5px" width="7.2" height="8.3" viewBox="0 0 8 10"><path d="M0 0L8 5L0 10Z" fill="#fff"/></svg>
<div class="abs" style="left:938.5px;top:514px;font-size:11.3px;font-weight:bold;color:#fff;line-height:13px;letter-spacing:0.45px">START</div>

<!-- modal -->
<div id="modal">
  <div class="abs" style="left:10.8px;top:14.5px;font-size:14px;line-height:16px;color:#fff;-webkit-text-stroke:0.25px #fff">Results</div>
  <div class="abs" style="left:741px;top:15.5px;width:13.2px;height:13.2px;border:2.2px solid #b8b8b8;border-radius:2.5px"></div>
  <div class="abs" style="left:761.6px;top:15px;font-size:11.5px;line-height:14px;color:#d2d2d2;white-space:nowrap;-webkit-text-stroke:0.25px #d2d2d2">Hide no match results</div>
  <svg style="left:895.8px;top:16.5px" width="11.5" height="11.5" viewBox="0 0 12 12"><path d="M1 1L11 11M11 1L1 11" stroke="#fff" stroke-width="2.1"/></svg>
  <div class="sep" style="top:44.4px"></div>
  <div class="abs" style="left:10.6px;top:60.4px;font-size:11.7px;font-weight:bold;line-height:14px;letter-spacing:-0.38px;white-space:nowrap">Validation Results</div>
  <div class="sep" style="top:90.4px"></div>
  <div class="th" style="left:16.2px">APIVersion</div>
  <div class="th" style="left:143.6px">Kind</div>
  <div class="th" style="left:231.7px">Resource</div>
  <div class="th" style="left:401.6px">Policy</div>
  <div class="th" style="left:609.4px">Rule</div>
  <div class="th" style="left:831px">Status</div>
  <div class="sep" style="top:129px"></div>
  <div class="td" style="left:16px;top:142px">v1</div>
  <div class="td" style="left:143.3px;top:142px">Pod</div>
  <div class="td" style="left:231.7px;top:142px">add-capabilities</div>
  <div class="td" style="left:401.6px;top:142px">drop-all-capabilities</div>
  <div class="td" style="left:609.2px;top:142px">require-drop-all</div>
  <div class="badge" style="left:826px;top:136.5px;width:37.5px;background:#2c612b">pass</div>
  <svg style="left:890px;top:145px" width="8" height="5" viewBox="0 0 8 5"><path d="M1 0.8L4 3.8L7 0.8" fill="none" stroke="#fff" stroke-width="1.8"/></svg>
  <div class="sep" style="top:166px"></div>
  <div class="td" style="left:16px;top:179px">v1</div>
  <div class="td" style="left:143.3px;top:179px">Pod</div>
  <div class="td" style="left:231.7px;top:179px">add-capabilities-bad</div>
  <div class="td" style="left:401.6px;top:179px">drop-all-capabilities</div>
  <div class="td" style="left:609.2px;top:179px">require-drop-all</div>
  <div class="badge" style="left:832.7px;top:174.7px;width:30.8px;background:#c8403d">fail</div>
  <svg style="left:890px;top:182px" width="8" height="5" viewBox="0 0 8 5"><path d="M1 0.8L4 3.8L7 0.8" fill="none" stroke="#fff" stroke-width="1.8"/></svg>
  <div class="sep" style="top:202.9px"></div>
  <div class="abs" style="left:11.6px;top:217px;font-size:10px;font-weight:bold;line-height:12px;color:#c4677a;letter-spacing:0px">CLOSE</div>
  <div class="abs" style="left:754.8px;top:208.8px;width:165.2px;height:25.8px;border-radius:3px;background:#2b333d"></div>
  <div class="abs" style="left:761.5px;top:217px;font-size:10px;font-weight:bold;line-height:12px;color:#7fb8ee;letter-spacing:0.22px;white-space:nowrap">COPY POLICY TO CLIPBOARD</div>
</div>

</body></html>
